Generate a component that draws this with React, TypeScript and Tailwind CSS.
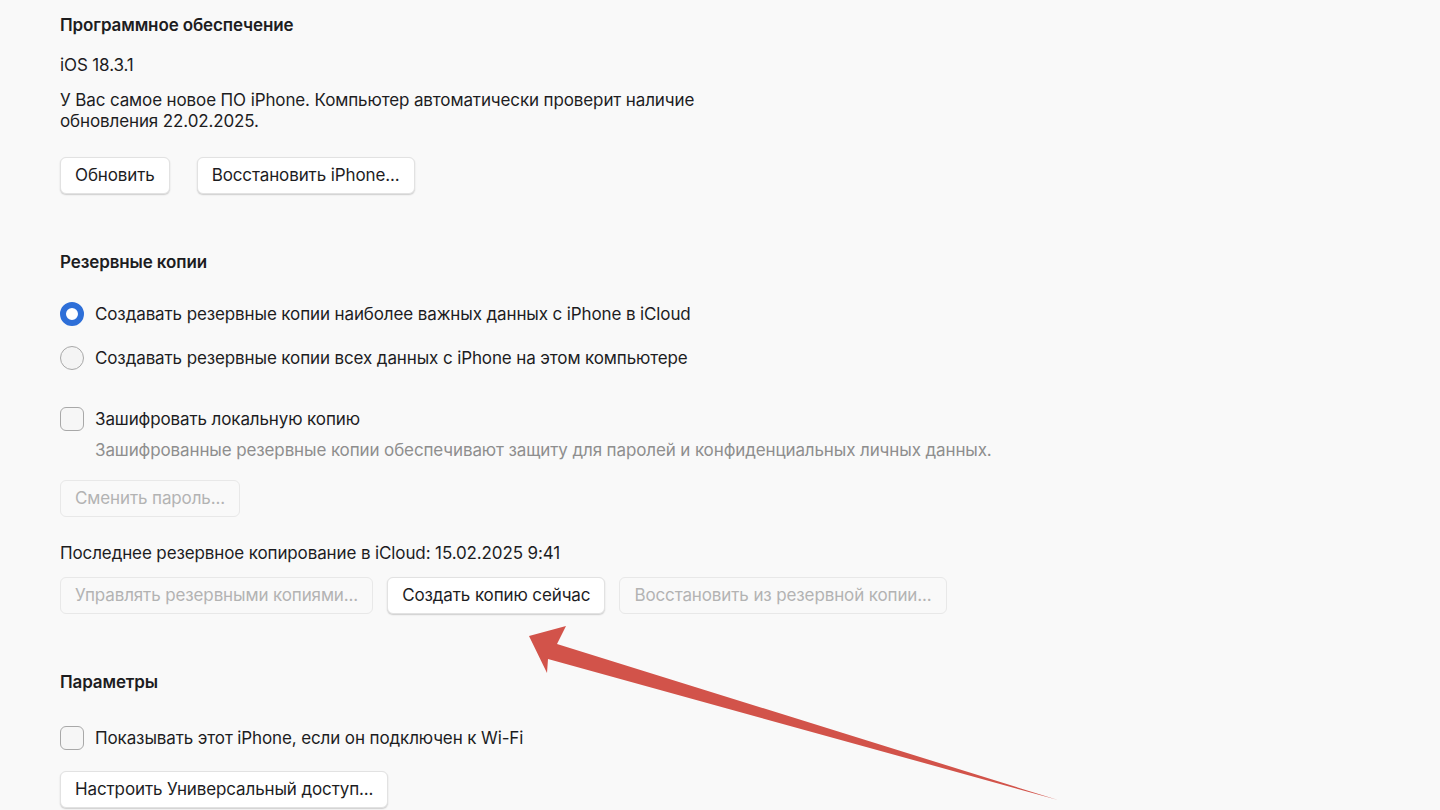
import React from "react";

const FONT = { fontFamily: "Inter, 'Noto Sans', 'Liberation Sans', sans-serif" };

function Btn({ children, disabled }: { children: React.ReactNode; disabled?: boolean }) {
  return (
    <button
      className={`h-[37px] px-[14px] rounded-[6px] text-[17px] leading-none whitespace-nowrap tracking-[-0.12px] ${
        disabled
          ? "bg-[#f9f9f9] text-[#b3b3b3] border border-[#e8e8e8]"
          : "bg-white text-[#1d1d1f] border border-[#e2e2e2] shadow-[0_1px_1.5px_rgba(0,0,0,0.18)]"
      }`}
    >
      {children}
    </button>
  );
}

function Radio({ checked }: { checked?: boolean }) {
  return checked ? (
    <span className="w-[24px] h-[24px] rounded-full border-[6px] border-[#2e6fd8] bg-white shrink-0" />
  ) : (
    <span className="w-[24px] h-[24px] rounded-full border border-[#a8a8a8] bg-[#f4f4f4] shrink-0" />
  );
}

function Check() {
  return <span className="w-[24px] h-[24px] rounded-[6px] border border-[#a8a8a8] bg-[#f6f6f6] shrink-0" />;
}

function Heading({ children, className }: { children: React.ReactNode; className?: string }) {
  return <h2 className={`text-[17px] leading-[21px] font-semibold text-[#1d1d1f] ${className ?? ""}`}>{children}</h2>;
}

export default function App() {
  return (
    <div className="relative w-[1440px] h-[810px] overflow-hidden bg-[#f9f9f9] text-[#1d1d1f]" style={FONT}>
      <div className="px-[60px] pt-[15px] text-[17px] leading-[21px] tracking-[-0.12px]">
        <Heading>Программное обеспечение</Heading>
        <p className="mt-[19px]">iOS 18.3.1</p>
        <p className="mt-[14px] w-[660px]">
          У Вас самое новое ПО iPhone. Компьютер автоматически проверит наличие
          <br />
          обновления 22.02.2025.
        </p>
        <div className="mt-[25px] flex gap-[27px]">
          <Btn>Обновить</Btn>
          <Btn>Восстановить iPhone...</Btn>
        </div>

        <Heading className="mt-[58px]">Резервные копии</Heading>
        <div className="mt-[29px] flex flex-col gap-[20px]">
          <label className="flex items-center gap-[11px]">
            <Radio checked />
            <span>Создавать резервные копии наиболее важных данных с iPhone в iCloud</span>
          </label>
          <label className="flex items-center gap-[11px]">
            <Radio />
            <span>Создавать резервные копии всех данных с iPhone на этом компьютере</span>
          </label>
        </div>
        <label className="mt-[37px] flex items-center gap-[11px]">
          <Check />
          <span>Зашифровать локальную копию</span>
        </label>
        <p className="mt-[9px] ml-[35px] text-[#8e8e8e]">
          Зашифрованные резервные копии обеспечивают защиту для паролей и конфиденциальных личных данных.
        </p>
        <div className="mt-[19px] flex">
          <Btn disabled>Сменить пароль...</Btn>
        </div>
        <p className="mt-[26px]">Последнее резервное копирование в iCloud: 15.02.2025 9:41</p>
        <div className="mt-[13px] flex gap-[14px]">
          <Btn disabled>Управлять резервными копиями...</Btn>
          <Btn>Создать копию сейчас</Btn>
          <Btn disabled>Восстановить из резервной копии...</Btn>
        </div>

        <Heading className="mt-[58px]">Параметры</Heading>
        <label className="mt-[33px] flex items-center gap-[11px]">
          <Check />
          <span>Показывать этот iPhone, если он подключен к Wi-Fi</span>
        </label>
        <div className="mt-[21px] flex">
          <Btn>Настроить Универсальный доступ...</Btn>
        </div>
      </div>

      <svg className="absolute left-0 top-0 pointer-events-none" width="1440" height="810" viewBox="0 0 1440 810">
        <polygon
          points="529,636 566,626 557,644 1058,800 548,659 547,673"
          fill="#d2534a"
        />
      </svg>
    </div>
  );
}
